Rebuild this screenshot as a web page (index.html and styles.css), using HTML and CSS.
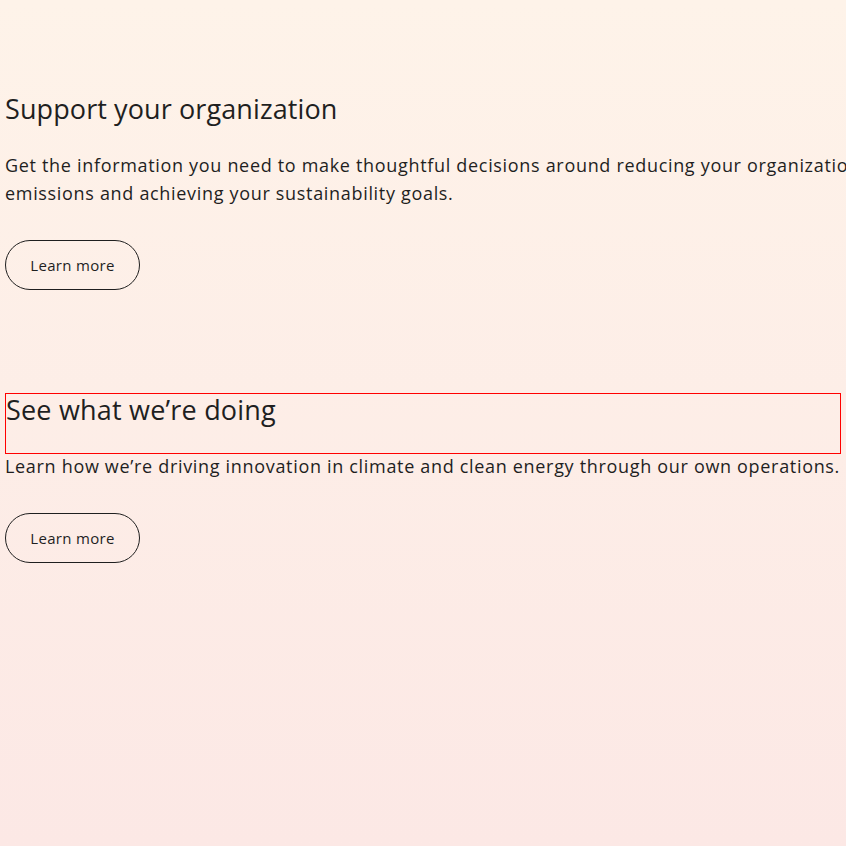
FILE: index.html
```html
<!DOCTYPE html>
<html lang="en">
<head>
<meta charset="utf-8">
<title>Sustainability</title>
<link rel="stylesheet" href="styles.css">
</head>
<body>
<main class="page">
  <section class="block block--wide">
    <h2 class="block__title">Support your organization</h2>
    <p class="block__text">Get the information you need to make thoughtful decisions around reducing your organization’s emissions and achieving your sustainability goals.</p>
    <a class="btn" href="#">Learn more</a>
  </section>
  <section class="block">
    <h2 class="block__title block__title--outlined">See what we’re doing</h2>
    <p class="block__text block__text--tight">Learn how we’re driving innovation in climate and clean energy through our own operations.</p>
    <a class="btn" href="#">Learn more</a>
  </section>
</main>
</body>
</html>
```
FILE: styles.css
```css
html, body {
  margin: 0;
  padding: 0;
  height: 100%;
}
body {
  background: linear-gradient(180deg, #fef3e9 0%, #fce8e5 100%);
  font-family: "Open Sans", "Noto Sans", sans-serif;
  color: #1f1f1f;
  overflow: hidden;
}
.page {
  padding: 87px 0 0 5px;
  display: flex;
  flex-direction: column;
  gap: 103px;
}
.block {
  width: 836px;
  display: flex;
  flex-direction: column;
  align-items: flex-start;
}
.block--wide {
  width: 900px;
}
.block__title {
  margin: 0;
  font-size: 27px;
  font-weight: 400;
  line-height: 44px;
  letter-spacing: 0.1px;
}
.block__title--outlined {
  box-sizing: border-box;
  align-self: stretch;
  height: 61px;
  line-height: 32px;
  letter-spacing: 0.2px;
  border: 1px solid #ff0000;
}
.block__text {
  margin: 20px 0 0;
  font-size: 18px;
  line-height: 28px;
  letter-spacing: 0.68px;
}
.block__text--tight {
  margin-top: -2px;
}
.btn {
  margin-top: 33px;
  box-sizing: border-box;
  width: 135px;
  height: 50px;
  border: 1px solid #1f1f1f;
  border-radius: 25px;
  display: flex;
  align-items: center;
  justify-content: center;
  font-size: 15px;
  letter-spacing: 0.3px;
  color: #1f1f1f;
  text-decoration: none;
}
```
